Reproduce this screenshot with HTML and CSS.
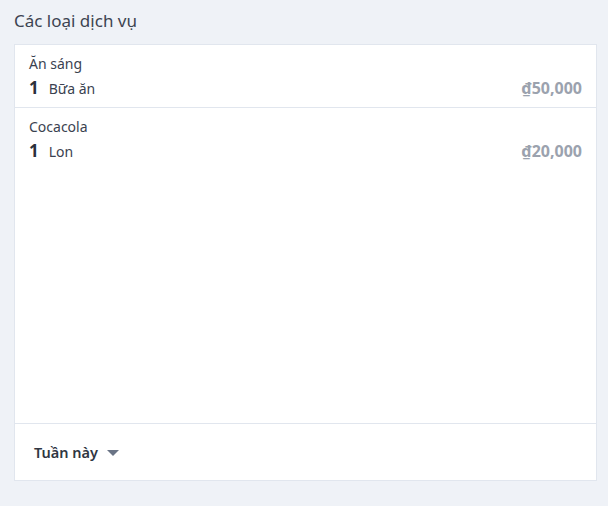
FILE: index.html
```html
<!DOCTYPE html>
<html lang="vi">
<head>
    <meta charset="UTF-8">
    <title>Các loại dịch vụ</title>
    <link rel="stylesheet" href="styles.css">
</head>
<body>
<div class="panel">
    <h2 class="panelTitle">Các loại dịch vụ</h2>
    <div class="card">
        <ul class="serviceList">
            <li class="service">
                <div class="serviceName">Ăn sáng</div>
                <div class="serviceRow">
                    <span class="qty">1</span>
                    <span class="unit">Bữa ăn</span>
                    <span class="price">₫50,000</span>
                </div>
            </li>
            <li class="service">
                <div class="serviceName">Cocacola</div>
                <div class="serviceRow">
                    <span class="qty">1</span>
                    <span class="unit">Lon</span>
                    <span class="price">₫20,000</span>
                </div>
            </li>
        </ul>
        <div class="cardFooter">
            <span class="period">Tuần này</span>
            <span class="caret"></span>
        </div>
    </div>
</div>
</body>
</html>
```

FILE: styles.css
```css
*{ padding: 0; margin: 0; box-sizing: border-box;}
html, body{ height: 100%;}
body{ background: #eff2f7; font-family: "Noto Sans", "Open Sans", sans-serif; color: #3a4250;}
.panel{ padding: 9px 11px 25px 14px;}
.panelTitle{ font-size: 17px; font-weight: normal; line-height: 24px; color: #3d4451; margin-bottom: 11px;}
.card{ background: #fff; border: 1px solid #e1e6ee; height: 437px; display: flex; flex-direction: column;}
.serviceList{ list-style: none; flex: 1;}
.service{ padding: 9px 14px 6px 14px; border-bottom: 1px solid #e1e6ee; height: 63px;}
.service:last-child{ border-bottom: none;}
.serviceName{ font-size: 14px; line-height: 20px; color: #3a4250;}
.serviceRow{ display: flex; align-items: baseline; line-height: 26px; margin-top: 1px;}
.qty{ font-size: 17px; font-weight: bold; color: #2b313b; margin-right: 10px;}
.unit{ font-size: 14px; color: #3a4250;}
.price{ margin-left: auto; font-size: 16px; font-weight: bold; color: #9ba2ae;}
.cardFooter{ height: 57px; border-top: 1px solid #e1e6ee; display: flex; align-items: center; padding: 0 19px;}
.period{ font-size: 14.5px; font-weight: 600; color: #2f3642;}
.caret{ width: 0; height: 0; border-left: 6px solid transparent; border-right: 6px solid transparent; border-top: 6px solid #6a7486; margin-left: 9px; margin-top: 1px;}
```
